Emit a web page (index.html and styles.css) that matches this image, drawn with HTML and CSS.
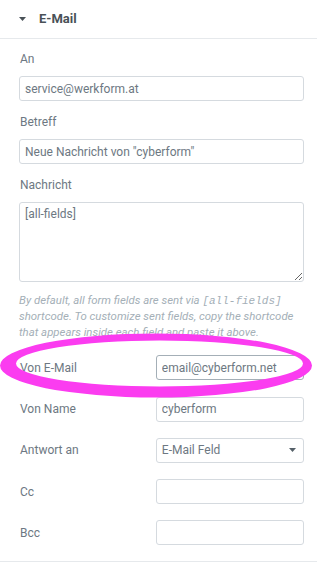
FILE: index.html
```html
<!DOCTYPE html>
<html lang="de">
<head>
<meta charset="utf-8">
<title>E-Mail</title>
<link rel="stylesheet" href="styles.css">
</head>
<body>
<div class="panel">
  <div class="section-head">
    <svg class="head-caret" width="7" height="4" viewBox="0 0 7 4"><path d="M0 0H7L3.5 4Z" fill="#495157"/></svg>
    <span class="section-title">E-Mail</span>
  </div>
  <div class="section-body">
    <div class="control">
      <label class="control-label">An</label>
      <input class="field" type="text" value="service@werkform.at">
    </div>
    <div class="control">
      <label class="control-label">Betreff</label>
      <input class="field" type="text" value="Neue Nachricht von &quot;cyberform&quot;">
    </div>
    <div class="control">
      <label class="control-label">Nachricht</label>
      <textarea class="field area">[all-fields]</textarea>
      <p class="desc">By default, all form fields are sent via <code>[all-fields]</code> shortcode. To customize sent fields, copy the shortcode that appears inside each field and paste it above.</p>
    </div>
    <div class="rows">
      <div class="row">
        <span class="row-label">Von E-Mail</span>
        <input class="field row-field is-focus" type="text" value="email@cyberform.net">
      </div>
      <div class="row">
        <span class="row-label">Von Name</span>
        <input class="field row-field" type="text" value="cyberform">
      </div>
      <div class="row">
        <span class="row-label">Antwort an</span>
        <div class="field row-field select">
          <span>E-Mail Feld</span>
          <svg class="sel-caret" width="7" height="4" viewBox="0 0 7 4"><path d="M0 0H7L3.5 4Z" fill="#556068"/></svg>
        </div>
      </div>
      <div class="row">
        <span class="row-label">Cc</span>
        <input class="field row-field" type="text" value="">
      </div>
      <div class="row">
        <span class="row-label">Bcc</span>
        <input class="field row-field" type="text" value="">
      </div>
    </div>
  </div>
  <svg class="highlight" width="317" height="72" viewBox="0 328 317 72">
    <path fill="#fb3cf0" fill-rule="evenodd" d="M0,365.5 a156,32 0 1,0 312,0 a156,32 0 1,0 -312,0 Z M16,363.5 a143.5,23 0 1,0 287,0 a143.5,23 0 1,0 -287,0 Z"/>
  </svg>
</div>
</body>
</html>
```

FILE: styles.css
```css
* { box-sizing: border-box; }
html, body { margin: 0; padding: 0; background: #fff; }
body {
  font-family: Roboto, "Liberation Sans", Arial, sans-serif;
  color: #6d7882;
  font-size: 12px;
}
.panel {
  position: relative;
  width: 317px;
  height: 566px;
  overflow: hidden;
}
.section-head {
  height: 39px;
  border-bottom: 1px solid #e6e9ec;
  display: flex;
  align-items: center;
  padding: 0 0 1px 19px;
  gap: 13px;
}
.head-caret { display: block; }
.section-title {
  font-weight: 700;
  font-size: 13px;
  color: #495157;
}
.section-body {
  padding: 13px 13px 16px 19px;
  border-bottom: 1px solid #e6e9ec;
}
.control { margin-bottom: 14px; }
.control:last-of-type { margin-bottom: 0; }
.control-label {
  display: block;
  line-height: 15px;
  margin-bottom: 9px;
  padding-left: 1px;
}
.field {
  display: block;
  width: 100%;
  height: 25px;
  border: 1px solid #d5dadf;
  border-radius: 3px;
  background: #fff;
  padding: 0 5px;
  font-family: inherit;
  font-size: 12px;
  color: #6d7882;
  outline: none;
}
.area {
  height: 80px;
  padding: 4px 5px;
  line-height: 15px;
  resize: vertical;
}
.desc {
  margin: 11px 0 0;
  font-size: 11.4px;
  line-height: 15.4px;
  font-style: italic;
  color: #a4afb7;
}
.desc code {
  font-family: "Liberation Mono", "Courier New", monospace;
  font-size: 11px;
}
.rows {
  margin-top: 15px;
  display: flex;
  flex-direction: column;
  gap: 16.3px;
}
.row {
  display: flex;
  align-items: center;
  justify-content: space-between;
}
.row-label { padding-left: 1px; }
.row-field { width: 52%; }
.is-focus { border-color: #a4afb7; }
.select {
  display: flex;
  align-items: center;
  justify-content: space-between;
  padding-right: 7px;
}
.sel-caret { display: block; }
.highlight {
  position: absolute;
  left: 0;
  top: 328px;
  pointer-events: none;
}
```
